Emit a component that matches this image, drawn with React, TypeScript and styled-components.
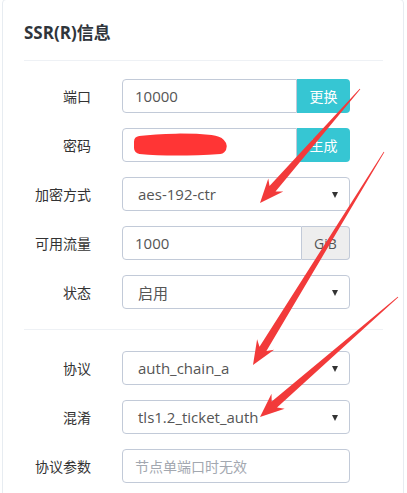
import React from 'react'
import styled, { createGlobalStyle, css } from 'styled-components'

const GlobalStyle = createGlobalStyle`
  html, body {
    margin: 0;
    padding: 0;
    background: #fff;
    overflow: hidden;
  }
  body {
    font-family: "Open Sans", "Noto Sans CJK SC", sans-serif;
    color: #333;
  }
`

type Row =
  | { label: string; kind: 'button'; value: string; action: string; redacted?: boolean }
  | { label: string; kind: 'addon'; value: string; unit: string }
  | { label: string; kind: 'select'; value: string }
  | { label: string; kind: 'text'; placeholder: string }

const upperRows: Row[] = [
  { label: '端口', kind: 'button', value: '10000', action: '更换' },
  { label: '密码', kind: 'button', value: '', action: '生成', redacted: true },
  { label: '加密方式', kind: 'select', value: 'aes-192-ctr' },
  { label: '可用流量', kind: 'addon', value: '1000', unit: 'GiB' },
  { label: '状态', kind: 'select', value: '启用' },
]

const lowerRows: Row[] = [
  { label: '协议', kind: 'select', value: 'auth_chain_a' },
  { label: '混淆', kind: 'select', value: 'tls1.2_ticket_auth' },
  { label: '协议参数', kind: 'text', placeholder: '节点单端口时无效' },
]

// start point -> tip of the red annotation arrows
const arrows = [
  { sx: 360, sy: 89, tx: 260, ty: 203 },
  { sx: 384, sy: 152, tx: 253, ty: 365 },
  { sx: 398, sy: 297, tx: 260, ty: 417 },
]

const arrowPoints = (sx: number, sy: number, tx: number, ty: number) => {
  const dx = tx - sx
  const dy = ty - sy
  const len = Math.hypot(dx, dy)
  const ux = dx / len
  const uy = dy / len
  const nx = -uy
  const ny = ux
  const headLen = 24
  const headW = 10
  const neck = 4
  const bx = tx - ux * headLen
  const by = ty - uy * headLen
  const nbx = tx - ux * (headLen - 5)
  const nby = ty - uy * (headLen - 5)
  const pts = [
    [sx + nx * 0.4, sy + ny * 0.4],
    [nbx + nx * neck, nby + ny * neck],
    [bx + nx * headW, by + ny * headW],
    [tx, ty],
    [bx - nx * headW, by - ny * headW],
    [nbx - nx * neck, nby - ny * neck],
    [sx - nx * 0.4, sy - ny * 0.4],
  ]
  return pts.map(([x, y]) => `${x.toFixed(1)},${y.toFixed(1)}`).join(' ')
}

const App: React.FC = () => {
  return (
    <>
      <GlobalStyle />
      <Page>
        <Portlet>
          <Title>SSR(R)信息</Title>
          <Divider />
          <Form>
            {upperRows.map((r) => (
              <FormRow key={r.label} row={r} />
            ))}
          </Form>
          <Divider $spaced />
          <Form>
            {lowerRows.map((r) => (
              <FormRow key={r.label} row={r} />
            ))}
          </Form>
        </Portlet>
        <Annotations width="407" height="493" viewBox="0 0 407 493">
          {arrows.map((a, i) => (
            <polygon key={i} points={arrowPoints(a.sx, a.sy, a.tx, a.ty)} fill="#f23a3a" />
          ))}
        </Annotations>
      </Page>
    </>
  )
}

const FormRow: React.FC<{ row: Row }> = ({ row }) => {
  return (
    <Group>
      <Label>{row.label}</Label>
      {row.kind === 'button' && (
        <InputGroup>
          <Field $joined>
            {row.redacted ? (
              <Scribble width="100" height="24" viewBox="0 0 100 24">
                <path
                  d="M9 9 C 30 6, 60 6, 80 8 C 89 9, 91 13, 89 15 C 60 17, 30 17, 9 15 Z"
                  stroke="#ff3535"
                  strokeWidth="12"
                  strokeLinecap="round"
                  strokeLinejoin="round"
                  fill="#ff3535"
                />
              </Scribble>
            ) : (
              row.value
            )}
          </Field>
          <ActionButton>{row.action}</ActionButton>
        </InputGroup>
      )}
      {row.kind === 'addon' && (
        <InputGroup>
          <Field $joined>{row.value}</Field>
          <Addon>{row.unit}</Addon>
        </InputGroup>
      )}
      {row.kind === 'select' && (
        <Select>
          <span>{row.value}</span>
          <Caret />
        </Select>
      )}
      {row.kind === 'text' && <Field $placeholder>{row.placeholder}</Field>}
    </Group>
  )
}

const Page = styled.div`
  position: relative;
  width: 407px;
  height: 493px;
  overflow: hidden;
`

const Portlet = styled.div`
  margin: -1px 3px 0 2px;
  padding: 21px 20px 40px 21px;
  border: 1px solid #e7ecf1;
  border-radius: 4px;
  background: #fff;
`

const Title = styled.div`
  font-size: 17px;
  font-weight: 700;
  line-height: 22px;
  color: #2f353b;
  padding: 1px 0 16px;
`

const Divider = styled.div<{ $spaced?: boolean }>`
  height: 1px;
  background: #eef1f5;
  margin: ${(p) => (p.$spaced ? '20px 0 21px' : '0 0 18px')};
`

const Form = styled.div`
  display: flex;
  flex-direction: column;
  gap: 15px;
`

const Group = styled.div`
  display: grid;
  grid-template-columns: 67px 228px;
  column-gap: 31px;
  align-items: center;
  height: 34px;
`

const Label = styled.div`
  text-align: right;
  font-size: 14px;
  color: #333;
`

const InputGroup = styled.div`
  display: flex;
  height: 34px;
`

const boxBase = css`
  box-sizing: border-box;
  height: 34px;
  border: 1px solid #c2cad8;
  background: #fff;
  font-size: 15px;
  color: #555;
  display: flex;
  align-items: center;
`

const Field = styled.div<{ $joined?: boolean; $placeholder?: boolean }>`
  ${boxBase};
  flex: 1;
  padding: 0 12px;
  border-radius: ${(p) => (p.$joined ? '4px 0 0 4px' : '4px')};
  ${(p) =>
    p.$placeholder &&
    css`
      color: #a3a8b0;
      font-size: 14px;
    `}
`

const ActionButton = styled.div`
  box-sizing: border-box;
  width: 53px;
  height: 34px;
  background: #36c6d3;
  color: #fff;
  font-size: 14px;
  display: flex;
  align-items: center;
  justify-content: center;
  border-radius: 0 4px 4px 0;
`

const Addon = styled.div`
  ${boxBase};
  width: 48px;
  justify-content: center;
  background: #eee;
  border-left: none;
  border-radius: 0 4px 4px 0;
  font-size: 14px;
`

const Select = styled.div`
  ${boxBase};
  justify-content: space-between;
  padding: 0 11px 0 15px;
  border-radius: 4px;
`

const Caret = styled.span`
  width: 0;
  height: 0;
  border-left: 3.5px solid transparent;
  border-right: 3.5px solid transparent;
  border-top: 6px solid #333;
  margin-top: 1px;
`

const Scribble = styled.svg`
  display: block;
  margin-left: -4px;
`

const Annotations = styled.svg`
  position: absolute;
  left: 0;
  top: 0;
  pointer-events: none;
`

export default App
